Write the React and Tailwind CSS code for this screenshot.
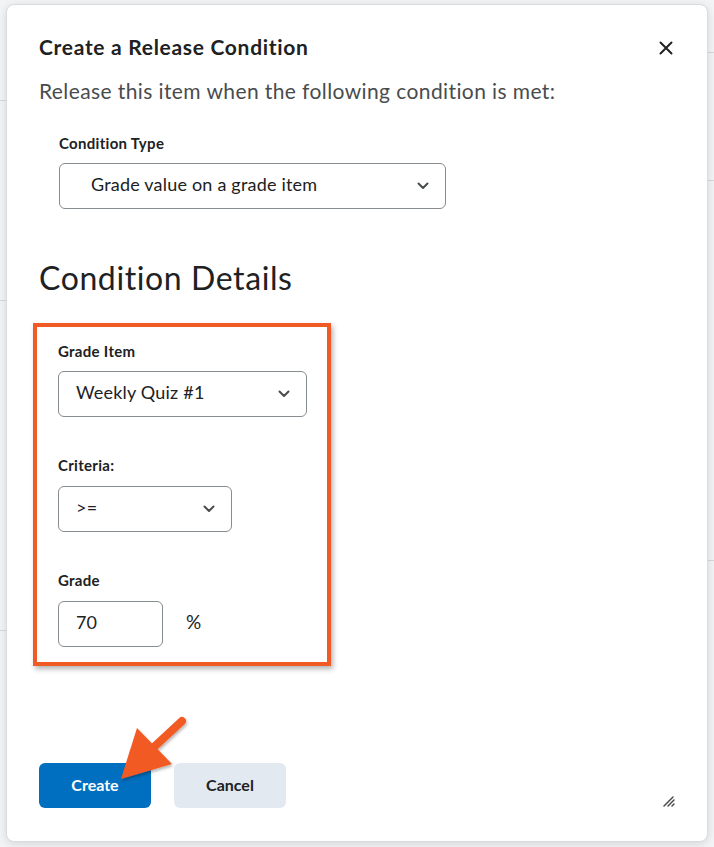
import React from "react";

function Chevron({ className = "" }) {
  return (
    <svg className={className} width="12" height="8" viewBox="0 0 12 8" fill="none">
      <path d="M1.5 1.5 L6 6 L10.5 1.5" stroke="#494c4e" strokeWidth="2" strokeLinecap="round" strokeLinejoin="round" />
    </svg>
  );
}

function Select({ width, text, textPad = "pl-[17px]", chevronRight = "pr-[16px]" }) {
  return (
    <div
      className={`flex items-center justify-between h-[46px] rounded-[6px] border border-[#868c8f] bg-white ${textPad} ${chevronRight}`}
      style={{ width }}
    >
      <span className="mb-[4px] text-[18px] tracking-[0.2px] text-[#202122]">{text}</span>
      <Chevron />
    </div>
  );
}

export default function App() {
  return (
    <div className="relative w-[714px] h-[847px] bg-[#f3f4f5] overflow-hidden" style={{ fontFamily: "Lato, 'Open Sans', sans-serif" }}>
      {/* faint background page */}
      <div className="absolute left-0 top-[100px] w-[6px] h-[1px] bg-[#d6d9db]" />
      <div className="absolute left-0 top-[300px] w-[6px] h-[1px] bg-[#d6d9db]" />
      <div className="absolute left-0 top-[630px] w-[6px] h-[1px] bg-[#d6d9db]" />
      <div className="absolute right-0 top-[52px] w-[6px] h-[1px] bg-[#d6d9db]" />
      <div className="absolute right-0 top-[180px] w-[6px] h-[1px] bg-[#d6d9db]" />
      <div className="absolute right-0 top-[560px] w-[6px] h-[1px] bg-[#d6d9db]" />

      {/* dialog */}
      <div className="absolute left-[6px] top-[4px] w-[702px] h-[838px] bg-white rounded-[8px] border border-[#d9dcde] shadow-[0_2px_10px_rgba(0,0,0,0.12)] flex flex-col pl-[32px] pt-[30px]">
        <div className="flex items-center justify-between pr-[34px]">
          <h1 className="text-[21px] leading-[24px] tracking-[0.7px] font-bold text-[#202122]">Create a Release Condition</h1>
          <svg width="14" height="14" viewBox="0 0 14 14" className="mt-[1px]">
            <path d="M1.5 1.5 L12.5 12.5 M12.5 1.5 L1.5 12.5" stroke="#202122" strokeWidth="2" strokeLinecap="round" />
          </svg>
        </div>
        <p className="mt-[18px] text-[21px] leading-[28px] tracking-[0.4px] text-[#494c4e]">Release this item when the following condition is met:</p>

        <div className="ml-[20px] mt-[28px]">
          <div className="text-[15px] leading-[20px] tracking-[0.3px] font-bold text-[#202122]">Condition Type</div>
          <div className="mt-[10px]">
            <Select width="387px" text="Grade value on a grade item" textPad="pl-[31px]" chevronRight="pr-[16px]" />
          </div>
        </div>

        <h2 className="mt-[49px] text-[32px] leading-[40px] tracking-[0.6px] font-normal text-[#202122]">Condition Details</h2>

        <div className="-ml-[6px] mt-[25px] w-[298px] border-[4px] border-[#f15a24] shadow-[2px_3px_5px_rgba(0,0,0,0.3)] pl-[21px] pt-[14px] pb-[15px]">
          <div className="text-[15px] leading-[20px] tracking-[0.3px] font-bold text-[#202122]">Grade Item</div>
          <div className="mt-[10px]">
            <Select width="249px" text="Weekly Quiz #1" />
          </div>

          <div className="mt-[38px] text-[15px] leading-[20px] tracking-[0.3px] font-bold text-[#202122]">Criteria:</div>
          <div className="mt-[11px]">
            <Select width="174px" text=">=" />
          </div>

          <div className="mt-[38px] text-[15px] leading-[20px] tracking-[0.3px] font-bold text-[#202122]">Grade</div>
          <div className="mt-[11px] flex items-center">
            <div className="w-[105px] h-[46px] rounded-[6px] border border-[#868c8f] flex items-center pl-[17px] pb-[4px] text-[18px] text-[#202122]">70</div>
            <span className="ml-[23px] mb-[4px] text-[19px] text-[#202122]">%</span>
          </div>
        </div>

        <div className="mt-[97px] flex gap-[23px]">
          <button className="w-[112px] h-[45px] rounded-[6px] bg-[#006fbf] text-white text-[16px] font-bold pb-[2px]">Create</button>
          <button className="w-[112px] h-[45px] rounded-[6px] bg-[#e3e9f1] text-[#202122] text-[16px] font-bold pb-[2px]">Cancel</button>
        </div>

        {/* resize handle */}
        <svg className="absolute left-[656px] top-[790px]" width="12" height="12" viewBox="0 0 12 12">
          <path d="M1 11 L10 2 M5 11 L11 5 M9 11 L11 9" stroke="#494c4e" strokeWidth="1.5" strokeLinecap="round" />
        </svg>
      </div>

      {/* annotation arrow */}
      <svg className="absolute left-0 top-0 pointer-events-none" width="714" height="847" viewBox="0 0 714 847">
        <defs>
          <filter id="sh" x="-20%" y="-20%" width="140%" height="140%">
            <feDropShadow dx="1" dy="2" stdDeviation="1.5" floodColor="#000" floodOpacity="0.3" />
          </filter>
        </defs>
        <g filter="url(#sh)">
          <line x1="182" y1="721" x2="140" y2="760" stroke="#f15a24" strokeWidth="8" strokeLinecap="round" />
          <polygon points="121,779 137,728 172,764" fill="#f15a24" />
        </g>
      </svg>
    </div>
  );
}
